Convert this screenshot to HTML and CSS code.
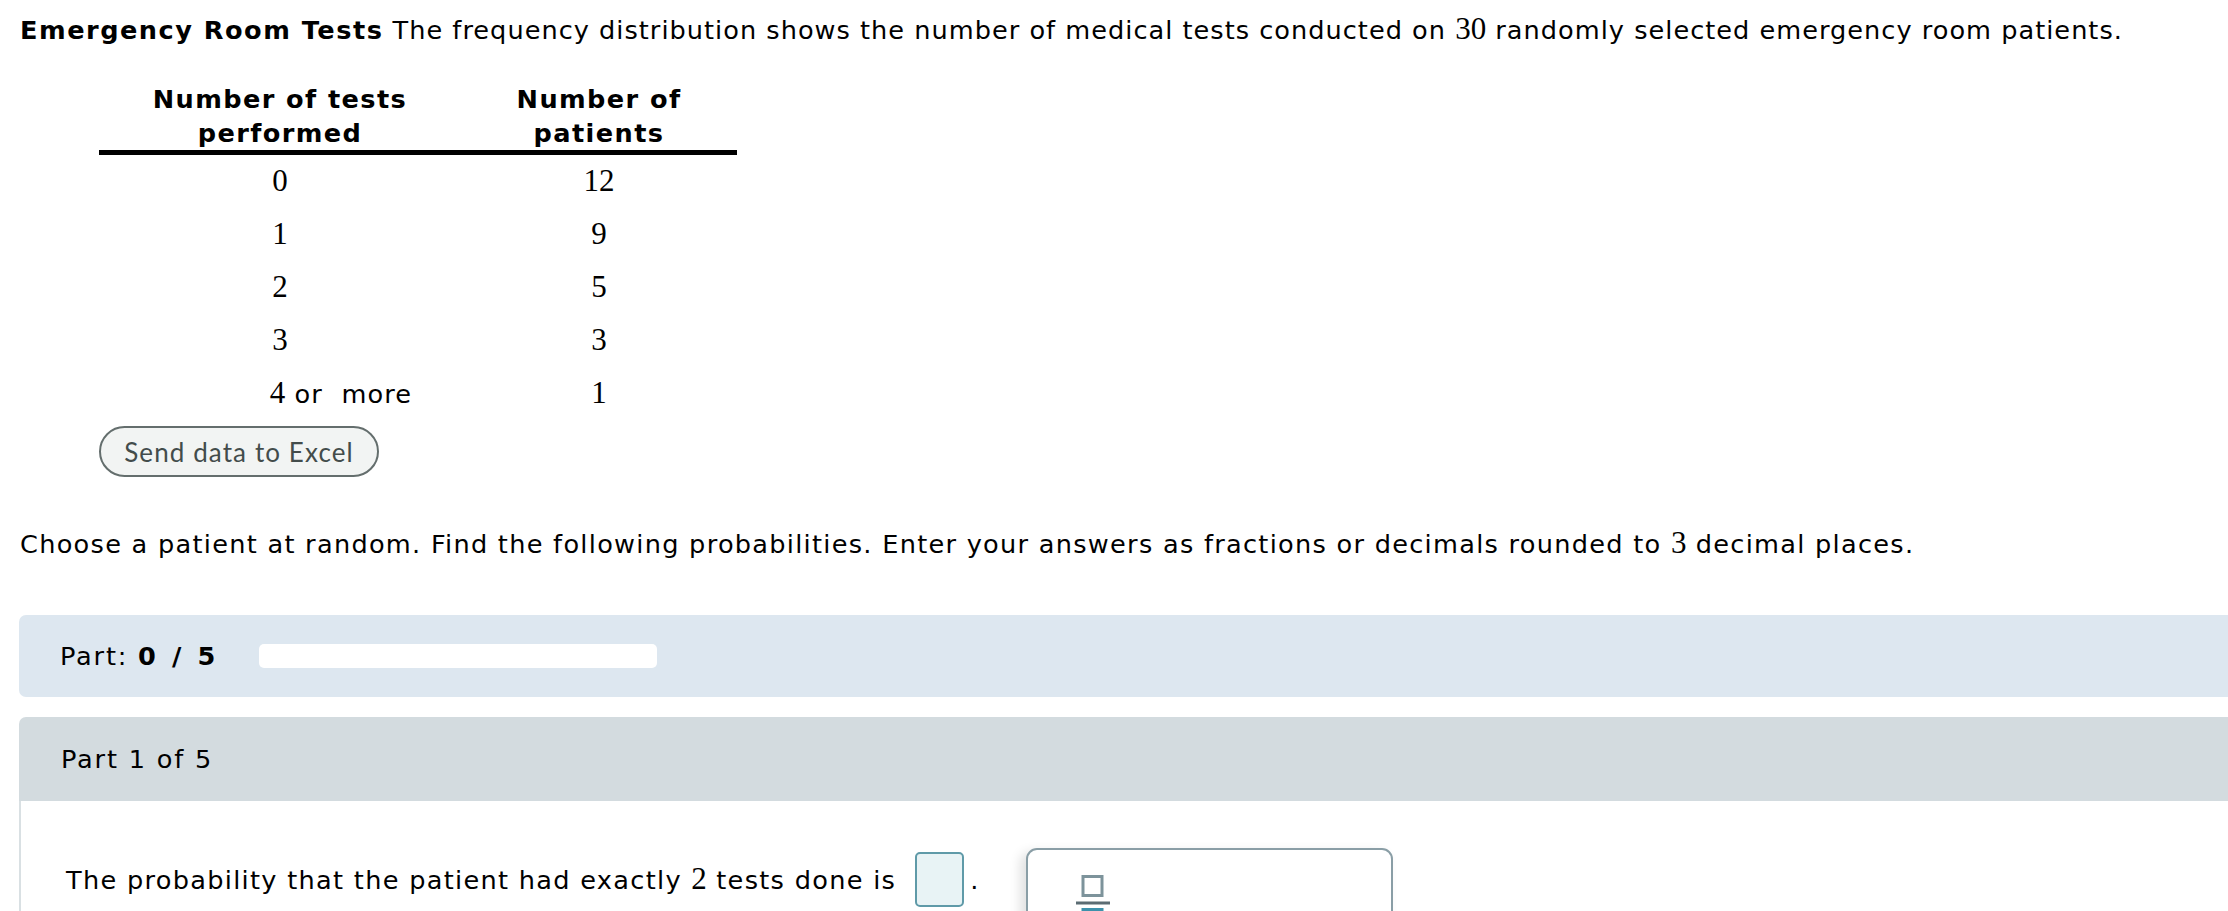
FILE: index.html
```html
<!DOCTYPE html>
<html lang="en">
<head>
<meta charset="utf-8">
<title>Emergency Room Tests</title>
<link rel="stylesheet" href="styles.css">
</head>
<body>
<div class="page">
  <p class="intro"><b>Emergency Room Tests</b> The frequency distribution shows the number of medical tests conducted on <span class="m">30</span> randomly selected emergency room patients.</p>
  <table class="freq">
    <thead>
      <tr><th class="c1">Number of tests<br>performed</th><th class="c2">Number of<br>patients</th></tr>
    </thead>
    <tbody>
      <tr><td><span class="m">0</span></td><td><span class="m">12</span></td></tr>
      <tr><td><span class="m">1</span></td><td><span class="m">9</span></td></tr>
      <tr><td><span class="m">2</span></td><td><span class="m">5</span></td></tr>
      <tr><td><span class="m">3</span></td><td><span class="m">3</span></td></tr>
      <tr><td class="more"><span class="m">4</span> or&nbsp; more</td><td><span class="m">1</span></td></tr>
    </tbody>
  </table>
  <button class="excel">Send data to Excel</button>
  <p class="instr">Choose a patient at random. Find the following probabilities. Enter your answers as fractions or decimals rounded to <span class="m">3</span> decimal places.</p>
</div>
<div class="progress">
  <span class="plabel">Part: <b>0 / 5</b></span>
  <div class="track"></div>
</div>
<section class="part">
  <div class="part-head">Part 1 of 5</div>
  <div class="part-body">
    <div class="q">
      <span class="qtext">The probability that the patient had exactly <span class="m">2</span> tests done is</span>
      <span class="ans"></span>
      <span class="dot">.</span>
    </div>
    <div class="keypad">
      <svg class="frac" width="36" height="60" viewBox="0 0 36 60">
        <rect x="8" y="1.5" width="19" height="19" fill="#ffffff" stroke="#7d939b" stroke-width="3"/>
        <line x1="1" y1="28" x2="35" y2="28" stroke="#5b6c73" stroke-width="3"/>
        <rect x="8" y="34.5" width="19" height="19" fill="#e6f2f5" stroke="#3c91ab" stroke-width="3"/>
      </svg>
    </div>
  </div>
</section>
</body>
</html>
```
FILE: styles.css
```css
html, body {
  margin: 0;
  padding: 0;
  overflow: hidden;
  background: #ffffff;
}
body {
  font-family: "DejaVu Sans", Verdana, sans-serif;
  font-size: 25.6px;
  line-height: 36px;
  letter-spacing: 1.1px;
  color: #000000;
}
b {
  letter-spacing: 1.5px;
}
.m {
  font-family: "Liberation Serif", "Times New Roman", serif;
  font-size: 31px;
  letter-spacing: 0;
}
.page {
  padding-left: 20px;
}
.intro {
  margin: 11px 0 0 0;
  white-space: nowrap;
  letter-spacing: 1.02px;
}
.freq {
  margin: 34px 0 0 79px;
  border-collapse: collapse;
}
.freq th {
  font-weight: bold;
  letter-spacing: 1.4px;
  line-height: 34px;
  padding: 0;
  text-align: center;
  border-bottom: 5px solid #000000;
}
.freq .c1 { width: 362px; }
.freq .c2 { width: 276px; }
.freq td {
  height: 52px;
  padding: 0;
  text-align: center;
  line-height: 52px;
}
.freq td.more {
  padding-left: 122px;
}
.excel {
  display: block;
  margin: 6px 0 0 79px;
  width: 280px;
  height: 51px;
  box-sizing: border-box;
  border: 2px solid #646e6d;
  border-radius: 26px;
  background: #f2f4f3;
  color: #434c4b;
  font-family: Lato, "Open Sans", sans-serif;
  font-size: 26px;
  letter-spacing: 1.1px;
  padding: 0;
}
.instr {
  margin: 48px 0 0 0;
  white-space: nowrap;
  letter-spacing: 1.28px;
}
.progress {
  margin: 53px -40px 0 19px;
  height: 82px;
  background: #dde7f0;
  border-radius: 7px;
  display: flex;
  align-items: center;
  padding-left: 41px;
}
.plabel {
  white-space: nowrap;
  width: 199px;
  letter-spacing: 1.8px;
}
.plabel b {
  letter-spacing: 3.6px;
}
.track {
  width: 398px;
  height: 24px;
  background: #ffffff;
  border-radius: 5px;
}
.part {
  margin: 20px -40px 0 19px;
}
.part-head {
  height: 84px;
  background: #d3dbdf;
  border-radius: 7px 7px 0 0;
  display: flex;
  align-items: center;
  padding-left: 42px;
  letter-spacing: 1.8px;
}
.part-body {
  position: relative;
  border-left: 2px solid #d9e0e3;
  padding: 51px 0 0 45px;
  min-height: 200px;
}
.q {
  display: flex;
  align-items: center;
  height: 55px;
  white-space: nowrap;
  letter-spacing: 1.3px;
}
.ans {
  margin-left: 19px;
  width: 49px;
  height: 55px;
  box-sizing: border-box;
  border: 2px solid #5f9aa8;
  border-radius: 5px;
  background: #e8f3f5;
}
.dot {
  margin-left: 6px;
}
.keypad {
  position: absolute;
  left: 1005px;
  top: 47px;
  width: 367px;
  height: 140px;
  box-sizing: border-box;
  border: 2px solid #8a9ea6;
  border-radius: 11px;
  background: #ffffff;
  box-shadow: -6px 4px 12px rgba(0, 0, 0, 0.12);
  padding: 25px 0 0 47px;
}
.frac {
  display: block;
}
```
